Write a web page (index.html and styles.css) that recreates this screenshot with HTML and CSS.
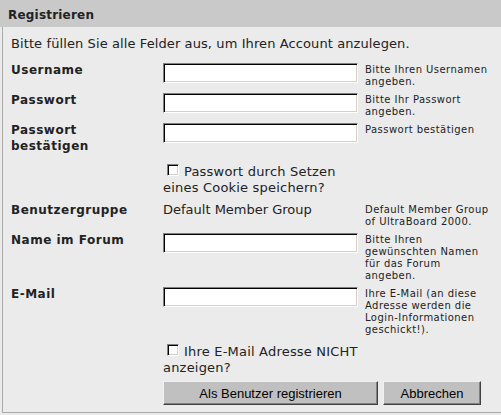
FILE: index.html
```html
<!DOCTYPE html>
<html lang="de">
<head>
<meta charset="utf-8">
<title>Registrieren</title>
<link rel="stylesheet" href="styles.css">
</head>
<body>
<div class="header">Registrieren</div>
<div class="panel">
  <p class="intro">Bitte füllen Sie alle Felder aus, um Ihren Account anzulegen.</p>
  <form class="form">
    <div class="lbl">Username</div>
    <div><input class="inp" type="text"></div>
    <div class="help">Bitte Ihren Usernamen<br>angeben.</div>

    <div class="lbl">Passwort</div>
    <div><input class="inp" type="password"></div>
    <div class="help">Bitte Ihr Passwort<br>angeben.</div>

    <div class="lbl">Passwort<br>bestätigen</div>
    <div><input class="inp" type="password"></div>
    <div class="help">Passwort bestätigen</div>

    <div class="check"><span class="box"></span>Passwort durch Setzen<br>eines Cookie speichern?</div>

    <div class="lbl">Benutzergruppe</div>
    <div class="val">Default Member Group</div>
    <div class="help">Default Member Group<br>of UltraBoard 2000.</div>

    <div class="lbl">Name im Forum</div>
    <div><input class="inp" type="text"></div>
    <div class="help">Bitte Ihren<br>gewünschten Namen<br>für das Forum<br>angeben.</div>

    <div class="lbl">E-Mail</div>
    <div><input class="inp" type="text"></div>
    <div class="help">Ihre E-Mail (an diese<br>Adresse werden die<br>Login-Informationen<br>geschickt!).</div>

    <div class="check"><span class="box"></span>Ihre E-Mail Adresse NICHT<br>anzeigen?</div>

    <div class="buttons">
      <button class="btn btn-main" type="button">Als Benutzer registrieren</button>
      <button class="btn btn-cancel" type="button">Abbrechen</button>
    </div>
  </form>
</div>
</body>
</html>
```
FILE: styles.css
```css
html, body {
  margin: 0;
  padding: 0;
}
body {
  width: 501px;
  height: 415px;
  overflow: hidden;
  background: #ebebeb;
  font-family: "DejaVu Sans", Verdana, sans-serif;
  color: #222;
}
.header {
  box-sizing: border-box;
  height: 27px;
  padding: 7px 0 0 8px;
  background: #c9c9c9;
  font-weight: bold;
  font-size: 12px;
  line-height: 16px;
  letter-spacing: 0.2px;
  color: #222;
}
.panel {
  margin-left: 2px;
  border-left: 1px solid #a9a9a9;
  border-bottom: 1px solid #a9a9a9;
  padding: 9px 0 7px 8px;
}
.intro {
  margin: 0;
  font-size: 13px;
  line-height: 16px;
  letter-spacing: 0.1px;
}
.form {
  margin: 11px 0 0 0;
  display: grid;
  grid-template-columns: 152px 202px 1fr;
  grid-template-rows: 30px 30px 41px 39px 30px 54px 57px 37px 24px;
  align-items: start;
}
.lbl {
  grid-column: 1;
  margin-top: -1px;
  font-size: 12px;
  font-weight: bold;
  line-height: 16px;
  letter-spacing: 0.5px;
}
.inp {
  display: block;
  box-sizing: border-box;
  width: 195px;
  height: 20px;
  margin: 0;
  padding: 0 2px;
  background: #fff;
  border-style: solid;
  border-width: 1px;
  border-color: #808080 #fff #fff #808080;
  box-shadow: inset 1px 1px 0 #000, inset -1px -1px 0 #d4d0c8;
  font: 12px "DejaVu Sans", sans-serif;
  outline: none;
}
.help {
  margin-top: 1px;
  font-size: 10px;
  line-height: 12px;
  letter-spacing: 0.45px;
  white-space: nowrap;
}
.val {
  margin-top: -1px;
  font-size: 13px;
  line-height: 16px;
  white-space: nowrap;
}
.check {
  grid-column: 2 / 4;
  font-size: 13px;
  line-height: 16px;
  letter-spacing: 0.2px;
  white-space: nowrap;
}
.box {
  display: inline-block;
  box-sizing: border-box;
  width: 12px;
  height: 12px;
  margin: 0 5px 0 4px;
  vertical-align: baseline;
  background: #fff;
  border-style: solid;
  border-width: 1px;
  border-color: #808080 #fff #fff #808080;
  box-shadow: inset 1px 1px 0 #000, inset -1px -1px 0 #d4d0c8;
}
.buttons {
  grid-column: 2 / 4;
  display: flex;
  gap: 5px;
}
.btn {
  box-sizing: border-box;
  height: 24px;
  margin: 0;
  padding: 0;
  background: #c0c0c0;
  border-style: solid;
  border-width: 1px;
  border-color: #f0f0f0 #404040 #404040 #f0f0f0;
  box-shadow: inset -1px -1px 0 #808080;
  font: 13px "Liberation Sans", Arial, sans-serif;
  color: #000;
}
.btn-main {
  width: 215px;
}
.btn-cancel {
  width: 98px;
}
```
